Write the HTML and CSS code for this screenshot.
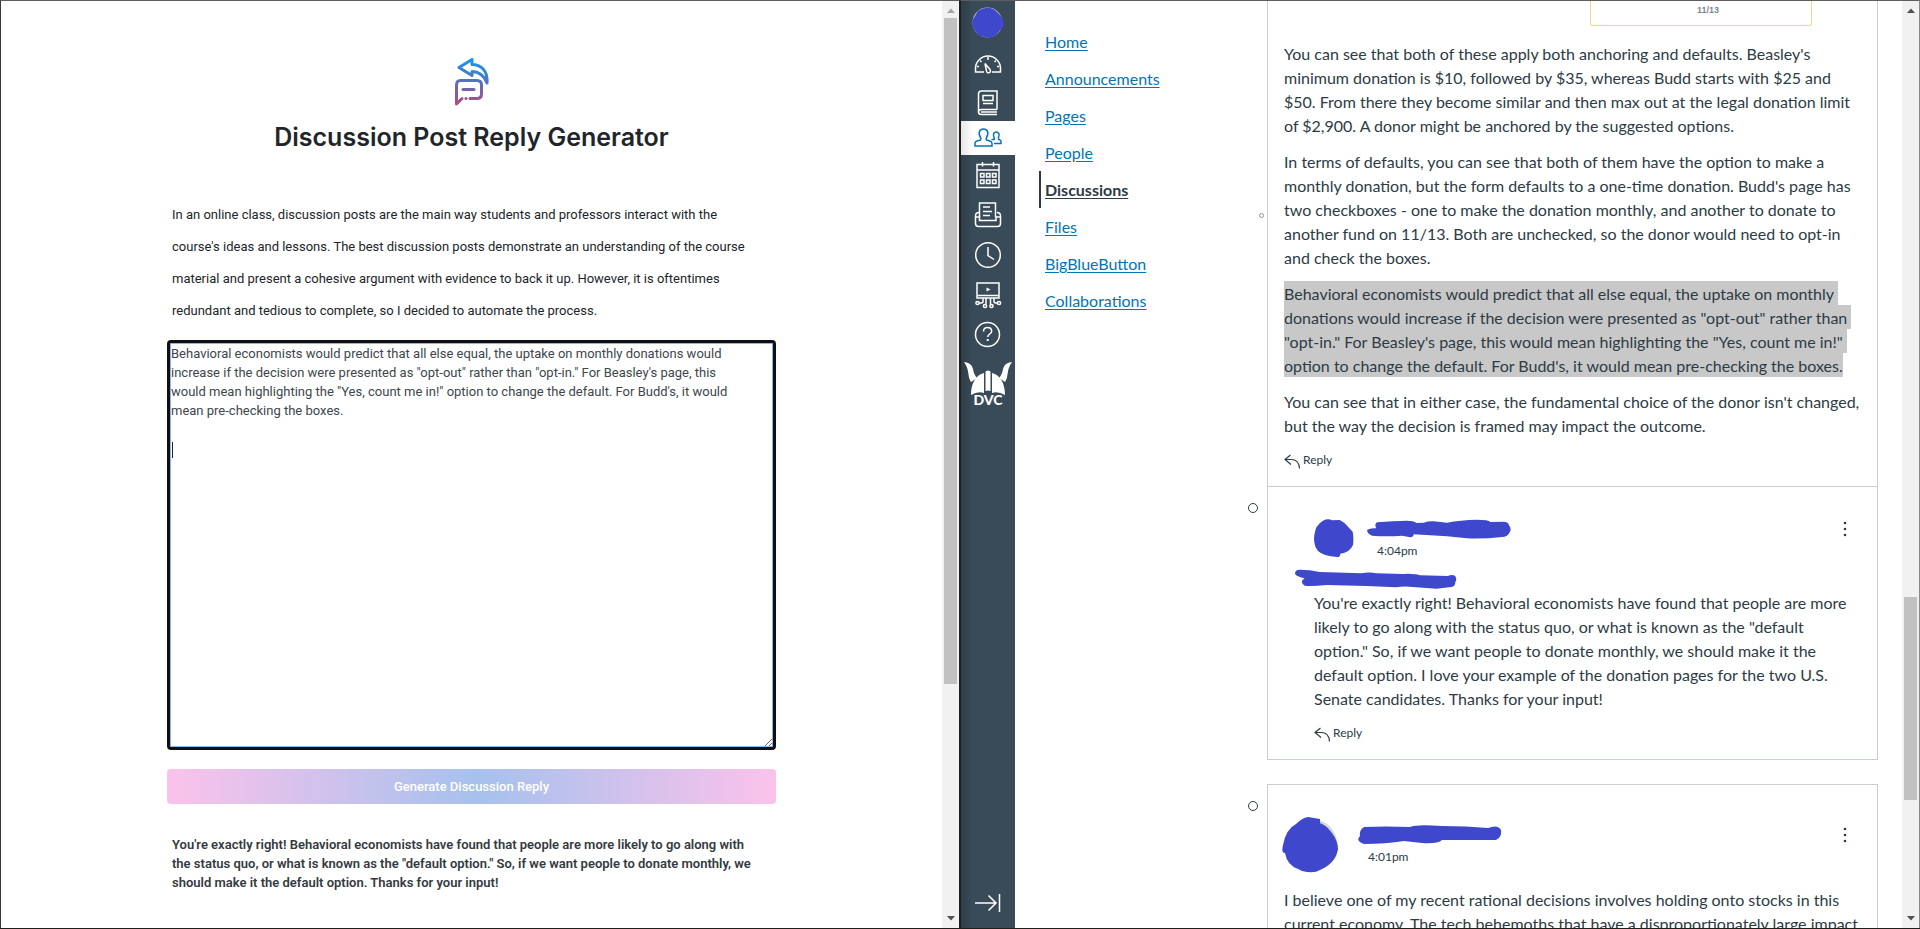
FILE: index.html
```html
<!DOCTYPE html>
<html lang="en">
<head>
<meta charset="utf-8">
<title>Discussion Post Reply Generator</title>
<link rel="stylesheet" href="styles.css">
</head>
<body>
<div class="desktop">
  <section class="window generator">
    <main class="generator-page">
      <form class="generator-form">
        <svg class="logo" viewBox="0 0 34 48" aria-hidden="true">
          <defs><linearGradient id="logo-fill" gradientUnits="userSpaceOnUse" x1="20" y1="0" x2="14" y2="48"><stop offset="0" stop-color="#0a9cf5"/><stop offset="0.5" stop-color="#5a6fbe"/><stop offset="1" stop-color="#b8487c"/></linearGradient></defs>
          <g fill="none" stroke="url(#logo-fill)" stroke-width="3" stroke-linejoin="round" stroke-linecap="round">
            <path d="M4 9.500 17 1.500V6.500C27 6.500 33 14 32 25C29 17.500 25 13.500 17 13.500V17.500Z"/>
            <path d="M15 40.500H22Q26.500 40.500 26.500 36V27Q26.500 22.500 22 22.500H5.500Q1.500 22.500 1.500 27V46L7 40.500"/>
            <path d="M8 31.500H19"/><path d="M11 40.500V40.600"/>
          </g>
        </svg>
        <h1 class="title">Discussion Post Reply Generator</h1>
        <p class="intro">In an online class, discussion posts are the main way students and professors interact with the<br>course's ideas and lessons. The best discussion posts demonstrate an understanding of the course<br>material and present a cohesive argument with evidence to back it up. However, it is oftentimes<br>redundant and tedious to complete, so I decided to automate the process.</p>
        <div class="prompt-field">
        <textarea class="prompt" aria-label="Discussion post">Behavioral economists would predict that all else equal, the uptake on monthly donations would
increase if the decision were presented as "opt-out" rather than "opt-in." For Beasley's page, this
would mean highlighting the "Yes, count me in!" option to change the default. For Budd's, it would
mean pre-checking the boxes.

</textarea>
        <span class="caret" aria-hidden="true"></span>
        </div>
        <button class="generate" type="button">Generate Discussion Reply</button>
        <p class="result">You're exactly right! Behavioral economists have found that people are more likely to go along with<br>the status quo, or what is known as the "default option." So, if we want people to donate monthly, we<br>should make it the default option. Thanks for your input!</p>
      </form>
    </main>
    <div class="scrollbar" aria-hidden="true">
      <svg class="arrow arrow-off" viewBox="0 0 8 5"><path d="M0 5 4 0.500 8 5Z"/></svg>
      <div class="track"><div class="thumb thumb-left"></div></div>
      <svg class="arrow" viewBox="0 0 8 5"><path d="M0 0 4 4.500 8 0Z"/></svg>
    </div>
  </section>

  <section class="window canvas">
    <nav class="global-nav" aria-label="Global">
      <a class="gn account" href="#" aria-label="Account"><svg width="32" height="32" viewBox="0 0 32 32"><circle cx="15.500" cy="15.500" r="15" fill="#c9d0d6"/><path fill="#3f48cc" d="M6 4Q15-2 23 3L27 7Q34 14 31 20L24 28 18 31 8 29Q-1 22 .5 13Z"/></svg></a>
      <a class="gn" href="#" aria-label="Dashboard"><svg width="28" height="20" viewBox="0 0 28 20"><path d="M10 17H1.500V13.500A12.500 12.500 0 0 1 26.500 13.500V17H18"/><path d="M11 8.500 16 14.500A2 2 0 1 1 12.500 16Z"/><path d="M14 2V5M6 5.500 7.500 7M22 5.500 20.500 7M3 11.500H5M23 11.500H25"/></svg></a>
      <a class="gn gn-book" href="#" aria-label="Courses"><svg width="22" height="26" viewBox="0 0 22 26"><path d="M20 19.500V1H4.500Q1.500 1 1.500 4V22Q1.500 24.500 4.500 24.500H20M20 19.500H4.500Q1.500 19.500 1.500 22M4 22H20M6 5.500H16V10.500H6ZM6 13.500H16"/></svg></a>
      <a class="gn gn-active" href="#" aria-label="Groups"><svg width="28" height="20" viewBox="0 0 28 20"><path d="M1 18V15Q1 13.500 3 13L6.500 12Q7.500 11 6.500 9.500C3.500 4.500 6 1 9.500 1S15.500 4.500 12.500 9.500Q11.500 11 12.500 12L16 13Q18 13.500 18 15.500V18Z"/><path d="M17.500 11.500 20 11.500Q21 11 20 9.500C18.500 6.500 20 4 22.300 4S26 6.500 24.500 9.500V11L26 12Q27 12.500 27 13.500V15.500H20"/></svg></a>
      <a class="gn" href="#" aria-label="Calendar"><svg width="24" height="28" viewBox="0 0 24 28"><path d="M1 3.500H23V26.500H1ZM1 9H23M6.500 1V5.500M17.500 1V5.500"/><path d="M4.500 12.500H8V16H4.500ZM10.500 12.500H14V16H10.500ZM16.500 12.500H20V16H16.500ZM4.500 19H8V22.500H4.500ZM10.500 19H14V22.500H10.500ZM16.500 19H20V22.500H16.500Z"/></svg></a>
      <a class="gn" href="#" aria-label="Inbox"><svg width="28" height="26" viewBox="0 0 28 26"><path d="M5.500 15V1H21.500V15M9 5H16M9 9.500H18M9 13.500H16"/><path d="M5 10.500Q1.500 10.500 1.500 14V21.500Q1.500 24.500 4.500 24.500H23.500Q26.500 24.500 26.500 21.500V14Q26.500 10.500 23 10.500M1.500 15H5.500V18.500H22V15H26.500"/></svg></a>
      <a class="gn" href="#" aria-label="History"><svg width="28" height="28" viewBox="0 0 28 28"><circle cx="14" cy="14" r="12.300"/><path d="M14 6V14.500L20 18.500"/></svg></a>
      <a class="gn" href="#" aria-label="Studio"><svg width="28" height="28" viewBox="0 0 28 28"><path d="M3 2H25V17H3ZM3 14.500H25"/><path class="solid" d="M12.500 6.500 16.500 8.500 12.500 10.500Z"/><path d="M9 17V20.500Q9 22 7 22H5M12 17V23M16.500 17V23M20 17V20.500Q20 22 22 22H23.500"/><circle cx="3.500" cy="22" r="1.600"/><circle cx="11" cy="25" r="1.600"/><circle cx="17.500" cy="25" r="1.600"/><circle cx="25" cy="22" r="1.600"/></svg></a>
      <a class="gn" href="#" aria-label="Help"><svg width="28" height="28" viewBox="0 0 28 28"><circle cx="13.500" cy="13.500" r="12"/><path d="M9.500 10.500Q9.500 6.500 13.500 6.500T17.700 10.200C17.700 13 13.700 13 13.700 16"/><path class="solid" d="M12.700 18H14.700V20H12.700Z"/></svg></a>
      <a class="gn gn-school" href="#" aria-label="DVC"><svg width="50" height="48" viewBox="0 0 50 48"><g class="solid"><path d="M1 1Q9 2 10 8T14 17L8 21C4 15 7 9 1 1Z"/><path d="M49 1Q41 2 40 8T36 17L42 21C46 15 43 9 49 1Z"/><path d="M21 12V32Q15 30 8 34C8 22 13 14 21 12Z"/><path d="M29 12V32Q35 30 42 34C42 22 37 14 29 12Z"/><path d="M22.500 30V11Q22.500 9.500 25 9.500T27.500 11V30Q25 29 22.500 30Z"/></g><text class="school-name" x="25" y="44" text-anchor="middle">DVC</text></svg></a>
      <button class="gn gn-collapse" type="button" aria-label="Expand navigation"><svg width="28" height="20" viewBox="0 0 28 20"><path d="M1 10H22M14.500 2.500 22 10 14.500 17.500M25.500 1V19"/></svg></button>
    </nav>

    <nav class="course-nav" aria-label="Course">
      <a href="#">Home</a><a href="#">Announcements</a><a href="#">Pages</a><a href="#">People</a><a class="current" href="#" aria-current="page">Discussions</a><a href="#">Files</a><a href="#">BigBlueButton</a><a href="#">Collaborations</a>
    </nav>

    <main class="thread">
      <article class="card">
        <span class="dot dot-small" aria-hidden="true"></span>
        <div class="entry entry-first">
          <div class="attachment">11/13</div>
          <p>You can see that both of these apply both anchoring and defaults. Beasley's<br>minimum donation is $10, followed by $35, whereas Budd starts with $25 and<br>$50. From there they become similar and then max out at the legal donation limit<br>of $2,900. A donor might be anchored by the suggested options.</p>
          <p>In terms of defaults, you can see that both of them have the option to make a<br>monthly donation, but the form defaults to a one-time donation. Budd's page has<br>two checkboxes - one to make the donation monthly, and another to donate to<br>another fund on 11/13. Both are unchecked, so the donor would need to opt-in<br>and check the boxes.</p>
          <p><mark class="selected">Behavioral economists would predict that all else equal, the uptake on monthly&nbsp;<br>donations would increase if the decision were presented as "opt-out" rather than&nbsp;<br>"opt-in." For Beasley's page, this would mean highlighting the "Yes, count me in!"&nbsp;<br>option to change the default. For Budd's, it would mean pre-checking the boxes.</mark></p>
          <p>You can see that in either case, the fundamental choice of the donor isn't changed,<br>but the way the decision is framed may impact the outcome.</p>
          <button class="reply" type="button"><svg width="17" height="15" viewBox="0 0 17 15" aria-hidden="true"><path d="M6.500 1 1 5.500 7 10.500M1 5.500H8Q15 6 15.500 14.500"/></svg>Reply</button>
        </div>
        <div class="entry entry-nested">
          <span class="dot" aria-hidden="true"></span>
          <header class="entry-head">
            <svg class="redacted" width="40" height="38" viewBox="133 57 120 114" aria-hidden="true"><path d="M160 62Q175 54 187 61L210 60Q225 68 230 75L249 95Q253 115 250 135 240 158 212 161 212 171 203 171 160 168 145 153 130 135 134 105 137 75 160 62Z"/></svg>
            <div class="author">
              <svg class="redacted" width="144" height="20" viewBox="290 60 432 60" aria-hidden="true"><path d="M320 70Q370 66 410 65 430 65 438 72L460 71Q475 66 490 67L530 71Q570 63 620 62 655 62 660 69L700 68Q714 68 716 79 724 88 719 98 712 114 695 114 640 120 590 118L530 112 430 106Q430 114 420 115L395 110Q350 114 305 110 288 102 291 92 300 86 318 88 311 75 320 70Z"/></svg>
              <time class="time">4:04pm</time>
            </div>
            <button class="kebab" type="button" aria-label="Manage discussion"><svg width="4" height="16" viewBox="0 0 4 16"><circle cx="2" cy="2" r="1.300"/><circle cx="2" cy="8" r="1.300"/><circle cx="2" cy="14" r="1.300"/></svg></button>
          </header>
          <svg class="redacted mention" width="162" height="20" viewBox="76 207 486 58" aria-hidden="true"><path d="M90 208Q120 208 150 215L275 219Q300 214 320 219L400 221Q435 219 450 225L535 227Q545 221 556 226 563 236 557 245 557 259 545 260L500 265 430 260Q400 257 380 261L290 257 170 254Q130 258 105 256 88 245 105 234 76 228 76 219 76 209 90 208Z"/></svg>
          <p>You're exactly right! Behavioral economists have found that people are more<br>likely to go along with the status quo, or what is known as the "default<br>option." So, if we want people to donate monthly, we should make it the<br>default option. I love your example of the donation pages for the two U.S.<br>Senate candidates. Thanks for your input!</p>
          <button class="reply" type="button"><svg width="17" height="15" viewBox="0 0 17 15" aria-hidden="true"><path d="M6.500 1 1 5.500 7 10.500M1 5.500H8Q15 6 15.500 14.500"/></svg>Reply</button>
        </div>
      </article>

      <article class="card">
        <div class="entry entry-second">
          <span class="dot" aria-hidden="true"></span>
          <header class="entry-head">
            <svg class="redacted" width="56" height="56" viewBox="0 0 56 56" aria-hidden="true"><circle class="photo" cx="30" cy="27" r="25"/><path d="M14 7Q20 1 26 0L38 2V6Q44 8 50 16 56 24 56 32 54 46 38 53 32 57 20 54L16 52Q5 48 3 36-1 36 1 28 4 12 14 7Z"/></svg>
            <div class="author">
              <svg class="redacted" width="144" height="20" viewBox="0 0 144 20" aria-hidden="true"><path d="M6 2Q28 1 52 2 58-1 84 1 108 1 130 3 140-1 143 5 144 12 138 15L84 15Q80 19 64 18L46 16Q28 19 6 19-3 16 2 11 1 5 6 2Z"/></svg>
              <time class="time">4:01pm</time>
            </div>
            <button class="kebab" type="button" aria-label="Manage discussion"><svg width="4" height="16" viewBox="0 0 4 16"><circle cx="2" cy="2" r="1.300"/><circle cx="2" cy="8" r="1.300"/><circle cx="2" cy="14" r="1.300"/></svg></button>
          </header>
          <p>I believe one of my recent rational decisions involves holding onto stocks in this<br>current economy. The tech behemoths that have a disproportionately large impact</p>
        </div>
      </article>
    </main>
    <div class="scrollbar" aria-hidden="true">
      <svg class="arrow" viewBox="0 0 8 5"><path d="M0 5 4 0.500 8 5Z"/></svg>
      <div class="track"><div class="space-above"></div><div class="thumb thumb-right"></div></div>
      <svg class="arrow" viewBox="0 0 8 5"><path d="M0 0 4 4.500 8 0Z"/></svg>
    </div>
  </section>
</div>
</body>
</html>
```
FILE: styles.css
```css
* { box-sizing: border-box; }
body { margin: 0; background: #fff; }
p, h1 { margin: 0; }
button { border: 0; background: none; padding: 0; font: inherit; color: inherit; }

.desktop { display: flex; height: 100vh; overflow: hidden; border-bottom: 1px solid #1f1f1a; }
.window { display: flex; min-width: 0; border-top: 1px solid #5f5d63; overflow: hidden; }

/* Reply generator */
.generator { flex: 0 0 50%; border-left: 1px solid #3a3a3a; border-right: 1px solid #1c2024; font: 13px/19px Roboto, "Liberation Sans", sans-serif; }
.generator-page { flex: 1; display: flex; justify-content: center; min-width: 0; overflow: hidden; }
.generator-form { display: flex; flex-direction: column; width: 100%; max-width: 609px; padding-top: 57px; }
.logo { width: 34px; height: 48px; align-self: center; }
.title { margin-top: 12px; text-align: center; font: 600 25px/38px Inter, sans-serif; color: #212529; }
.intro { margin-top: 43px; padding-left: 5px; line-height: 32px; color: #212529; white-space: nowrap; }
.prompt-field { position: relative; margin-top: 13px; }
.prompt { display: block; width: 100%; height: 410px; padding: 1px; border: 3px solid #101010; border-radius: 4px; outline: none; box-shadow: inset 0 0 0 1px #86b7fe; resize: both; font: inherit; color: #40464c; overflow: hidden; background: #fff; }
.caret { position: absolute; left: 5px; top: 102px; width: 1px; height: 16px; background: #212529; }
.generate { height: 35px; margin-top: 19px; border-radius: 4px; background: linear-gradient(to right, #fbc2eb 0%, #a6c1ee 51%, #fbc2eb 100%); color: #fff; font-weight: 500; }
.result { margin-top: 31px; padding-left: 5px; font-weight: 600; color: #343a40; white-space: nowrap; }

/* Scrollbars */
.scrollbar { display: flex; flex-direction: column; flex: 0 0 17px; align-items: center; background: #f1f1f1; padding: 7px 0; }
.arrow { width: 8px; height: 5px; fill: #505050; }
.arrow-off { fill: #a3a3a3; }
.track { flex: 1; display: flex; flex-direction: column; width: 13px; margin: 5px 0; }
.thumb { background: #c1c1c1; }
.thumb-left { flex: 0 0 74.6%; }
.space-above { flex: 0 0 64.8%; }
.thumb-right { flex: 0 0 22.8%; }

/* Course site */
.canvas { flex: 1; border-left: 1px solid #1c2024; border-right: 1px solid #8a8a8a; font: 16px/24px Lato, sans-serif; color: #2d3b45; }
.global-nav { display: flex; flex-direction: column; flex: 0 0 54px; background: linear-gradient(to right, #2f3d48, #394b58 12px); }
.gn { display: flex; align-items: center; justify-content: center; height: 40px; flex: none; }
.gn svg { fill: none; stroke: #fff; stroke-width: 1.5; }
.gn .solid { fill: #fff; stroke: none; }
.account { height: 44px; }
.gn.account svg { stroke: none; }
.gn-book { height: 36px; }
.gn-active { height: 34px; background: linear-gradient(to right, #e6e6e6, #fff 12px); }
.gn.gn-active svg { stroke: #0374b5; }
.gn-school { height: 60px; }
.gn .school-name { font: 900 14px Lato, sans-serif; fill: #fff; stroke: none; }
.gn-collapse { margin: auto 0 5px; }

.course-nav { display: flex; flex-direction: column; flex: 0 0 226px; padding: 22px 0 0 24px; }
.course-nav a { height: 37px; padding-left: 6px; line-height: 37px; color: #0374b5; text-decoration: underline; text-underline-offset: 2px; }
.course-nav .current { padding-left: 4px; border-left: 2px solid #2d3b45; color: #2d3b45; font-weight: 700; }

.thread { flex: 1; display: flex; flex-direction: column; gap: 24px; min-width: 0; padding: 0 24px 0 26px; }
.card { position: relative; flex: none; border: 1px solid #c7cdd1; }
.card:first-child { border-top: 0; }
.entry { position: relative; padding: 0 17px 0 16px; }
.entry p { margin-bottom: 12px; white-space: nowrap; }
.entry-first { padding-bottom: 16px; border-bottom: 1px solid #c7cdd1; }
.entry-nested { padding: 32px 17px 16px 46px; }
.entry-second { padding-top: 32px; }
.attachment { width: 222px; height: 25px; margin: 0 auto 16px 306px; padding-left: 14px; border: 1px solid #f0d98a; border-top: 0; border-radius: 0 0 3px 3px; font: 700 9px/18px "Liberation Sans", sans-serif; color: #7b868e; text-align: center; }
.selected { background: #c8c8c8; color: inherit; padding: 3px 0 2px; }
.reply { display: flex; align-items: center; gap: 2px; height: 20px; font-size: 12px; margin-top: 11px; }
.reply svg { margin-top: 3px; fill: none; stroke: #2d3b45; stroke-width: 1.2; }

.entry-head { display: flex; align-items: flex-start; }
.redacted { flex: none; fill: #3f48cc; }
.photo { fill: #d5d9dc; }
.author { display: flex; flex-direction: column; flex: 1; margin-left: 13px; }
.time { margin: 2px 0 0 10px; font-size: 12px; line-height: 20px; }
.entry-second .author { margin: 8px 0 0 20px; }
.kebab { width: 4px; height: 16px; margin: 2px 13px 0 0; display: flex; }
.kebab svg { fill: #2d3b45; }
.entry-second .kebab { margin-top: 10px; }
.entry-second .entry-head { margin: 0 0 15px -2px; }
.mention { display: block; margin: 8px 0 2px -19px; }

.dot { position: absolute; left: -20px; top: 16px; width: 10px; height: 10px; border: 1px solid #2d3b45; border-radius: 50%; }
.dot-small { left: -9px; top: 212px; width: 5px; height: 5px; border-color: #8f99a1; }
```
